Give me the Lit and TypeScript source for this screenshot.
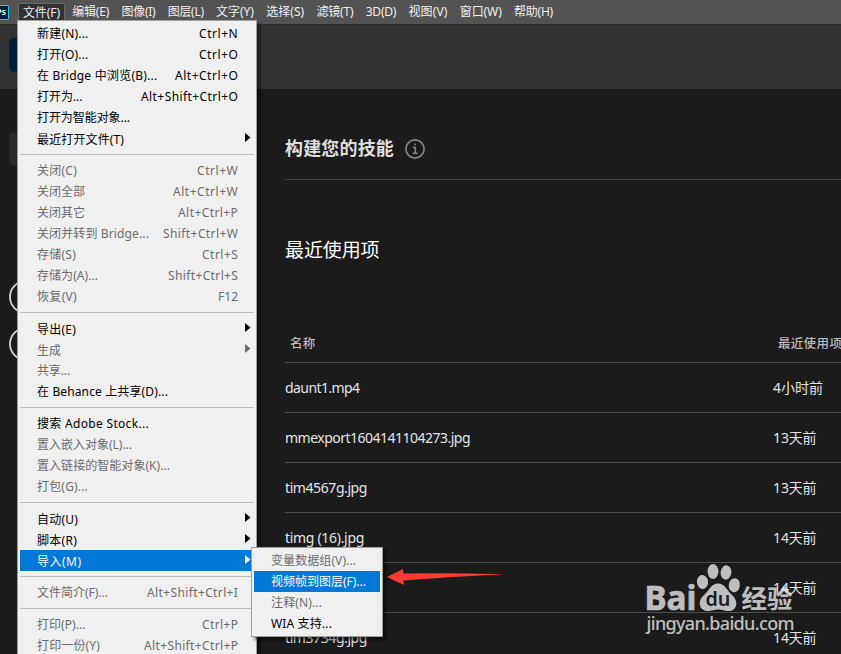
import { LitElement, html, css } from "lit";
import { customElement, property } from "lit/decorators.js";
import { classMap } from "lit/directives/class-map.js";

/** A run of text tracked so that it spans exactly `width` pixels. */
@customElement("fit-text")
class FitText extends LitElement {
  @property() text = "";
  @property({ type: Number }) width = 0;
  static styles = css`
    :host { display: inline-block; white-space: pre; }
  `;
  updated() {
    const span = this.renderRoot.querySelector("span") as HTMLElement;
    span.style.letterSpacing = "0px";
    if (!this.width) return;
    const natural = span.getBoundingClientRect().width;
    span.style.letterSpacing = `${(this.width - natural) / this.text.length}px`;
  }
  render() {
    return html`<span>${this.text}</span>`;
  }
}

interface Item {
  label: string;
  w: number;
  keys?: string;
  kw?: number;
  sub?: boolean;
  off?: boolean;
  on?: boolean;
}

const fileMenu: Item[][] = [
  [
    { label: "新建(N)...", w: 51.5, keys: "Ctrl+N", kw: 39.3 },
    { label: "打开(O)...", w: 51.5, keys: "Ctrl+O", kw: 39.3 },
    { label: "在 Bridge 中浏览(B)...", w: 120.5, keys: "Alt+Ctrl+O", kw: 63.3 },
    { label: "打开为...", w: 45.5, keys: "Alt+Shift+Ctrl+O", kw: 97.3 },
    { label: "打开为智能对象...", w: 93 },
    { label: "最近打开文件(T)", w: 87, sub: true },
  ],
  [
    { label: "关闭(C)", w: 40, keys: "Ctrl+W", kw: 41.3, off: true },
    { label: "关闭全部", w: 48, keys: "Alt+Ctrl+W", kw: 65.3, off: true },
    { label: "关闭其它", w: 48, keys: "Alt+Ctrl+P", kw: 60.3, off: true },
    { label: "关闭并转到 Bridge...", w: 112, keys: "Shift+Ctrl+W", kw: 75.3, off: true },
    { label: "存储(S)", w: 39, keys: "Ctrl+S", kw: 36.3, off: true },
    { label: "存储为(A)...", w: 61, keys: "Shift+Ctrl+S", kw: 70.3, off: true },
    { label: "恢复(V)", w: 40, keys: "F12", kw: 20.3, off: true },
  ],
  [
    { label: "导出(E)", w: 39, sub: true },
    { label: "生成", w: 24, sub: true, off: true },
    { label: "共享...", w: 33, off: true },
    { label: "在 Behance 上共享(D)...", w: 131 },
  ],
  [
    { label: "搜索 Adobe Stock...", w: 112 },
    { label: "置入嵌入对象(L)...", w: 95, off: true },
    { label: "置入链接的智能对象(K)...", w: 133, off: true },
    { label: "打包(G)...", w: 51, off: true },
  ],
  [
    { label: "自动(U)", w: 41, sub: true },
    { label: "脚本(R)", w: 40, sub: true },
    { label: "导入(M)", w: 44.5, sub: true, on: true },
  ],
  [{ label: "文件简介(F)...", w: 71, keys: "Alt+Shift+Ctrl+I", kw: 91.3, off: true }],
  [
    { label: "打印(P)...", w: 48.5, keys: "Ctrl+P", kw: 36.3, off: true },
    { label: "打印一份(Y)", w: 63, keys: "Alt+Shift+Ctrl+P", kw: 94.3, off: true },
  ],
];

const importMenu: Item[][] = [
  [
    { label: "变量数据组(V)...", w: 85, off: true },
    { label: "视频帧到图层(F)...", w: 95, on: true },
    { label: "注释(N)...", w: 51, off: true },
    { label: "WIA 支持...", w: 61 },
  ],
];

@customElement("drop-menu")
class DropMenu extends LitElement {
  @property({ attribute: false }) groups: Item[][] = [];
  static styles = css`
    :host {
      display: block;
      box-sizing: border-box;
      background: #f0f0f0;
      border: 1px solid #a0a0a0;
      padding: 2px;
      box-shadow: 3px 3px 3px rgba(0, 0, 0, 0.5);
      font-size: 12px;
      color: #000;
    }
    .row {
      height: 21px;
      display: flex;
      align-items: center;
      padding: 0 0 0 17px;
    }
    .row fit-text { line-height: 21px; height: 21px; }
    .row.sub fit-text { line-height: 23px; }
    .keys { margin-left: auto; margin-right: 15.7px; }
    .off { color: #6d6d6d; }
    .on { background: #0078d7; color: #fff; }
    .arrow { margin: 0 3px 1px auto; width: 6px; height: 10px; fill: currentColor; }
    .sep { height: 1px; margin: 5px 0; background: #bdbdbd; }
  `;
  render() {
    return this.groups.map(
      (g, i) => html`
        ${i ? html`<div class="sep"></div>` : ""}
        ${g.map(
          (it) => html`<div class=${classMap({ row: true, off: !!it.off, on: !!it.on, sub: !!it.sub })}>
            <fit-text .text=${it.label} .width=${it.w}></fit-text>
            ${it.keys ? html`<fit-text class="keys" .text=${it.keys} .width=${it.kw ?? 0}></fit-text>` : ""}
            ${it.sub ? html`<svg class="arrow" viewBox="0 0 6 10"><path d="M0 0L5.5 4.5L0 9Z"/></svg>` : ""}
          </div>`
        )}
      `
    );
  }
}

const bar: [string, number][] = [
  ["文件(F)", 37], ["编辑(E)", 37], ["图像(I)", 34], ["图层(L)", 36], ["文字(Y)", 38],
  ["选择(S)", 38], ["滤镜(T)", 37], ["3D(D)", 30.5], ["视图(V)", 39], ["窗口(W)", 42], ["帮助(H)", 39],
];

const files: [string, number, string, number][] = [
  ["daunt1.mp4", 74.5, "4小时前", 50],
  ["mmexport1604141104273.jpg", 185, "13天前", 43.5],
  ["tim4567g.jpg", 82, "13天前", 43.5],
  ["timg (16).jpg", 79, "14天前", 43.5],
  ["tim2208g.jpg", 82, "14天前", 43.5],
  ["tim3734g.jpg", 82, "14天前", 43.5],
];

@customElement("app-root")
class AppRoot extends LitElement {
  static styles = css`
    :host {
      display: block;
      position: relative;
      width: 841px;
      height: 654px;
      overflow: hidden;
      background: #1b1b1b;
      color: #e4e4e4;
      font-family: "Noto Sans", "Noto Sans CJK SC", sans-serif;
    }
    .bar {
      height: 24px;
      box-sizing: border-box;
      background: #535353;
      display: flex;
      align-items: center;
      font-size: 12px;
      color: #f0f0f0;
      gap: 12.25px;
    }
    .ps {
      width: 9px; height: 15px; box-sizing: border-box; margin-right: -3.3px;
      border: 1px solid #26c9ff; border-left: 0; border-radius: 0 2px 2px 0;
      background: #001d34; color: #d5f3ff; overflow: hidden;
      display: flex; justify-content: flex-end; align-items: center;
      font: bold 9px/12px "Noto Sans", sans-serif; padding-right: 2px;
    }
    .bar fit-text { line-height: 18px; }
    .bar .active {
      background: #323232; border: 1px solid #686868; border-radius: 2px 2px 0 0;
      height: 17px; line-height: 17px; padding: 0 4px; margin-right: -5px;
    }
    .hero { height: 64px; background: #323232; border-top: 1px solid #282828; }
    .main { padding-left: 285px; display: flex; flex-direction: column; }
    .skills {
      height: 91px; box-sizing: border-box; border-bottom: 1px solid #3f3f3f;
      display: flex; align-items: center; gap: 11px; padding-top: 29px;
      font-size: 18px; font-weight: bold; color: #dedede;
    }
    .info { width: 20px; height: 20px; }
    .skills fit-text { line-height: 30px; margin-top: -2px; }
    h2 { margin: 0; height: 142px; line-height: 140px; font-size: 19px; font-weight: 400; color: #fff; }
    .head {
      height: 41px; box-sizing: border-box; border-bottom: 1px solid #4b4b4b;
      display: flex; align-items: center; font-size: 12.5px; font-weight: 500; color: #bcbcbc;
      font-family: "Noto Sans CJK SC", sans-serif; padding-left: 5px;
    }
    .name { width: 488px; flex: none; }
    .file {
      height: 50px; box-sizing: border-box; border-bottom: 1px solid #4b4b4b;
      display: flex; align-items: center; font-size: 14px;
    }
    .date { margin-top: -2px; }
    .left { position: absolute; left: 0; top: 0; }
    .menu { position: absolute; left: 17px; top: 20px; width: 240px; height: 660px; }
    .submenu { position: absolute; left: 251px; top: 547px; width: 132px; height: 90px; }
    .red { position: absolute; left: 385px; top: 566px; }
    .mark { position: absolute; left: 640px; top: 560px; opacity: 0.76; }
    .mark text { font-family: "Noto Sans", "Noto Sans CJK SC", sans-serif; }
  `;
  render() {
    return html`
      <div class="bar">
        <div class="ps">Ps</div>
        ${bar.map(([t, w], i) => html`<fit-text class=${i ? "" : "active"} .text=${t} .width=${w}></fit-text>`)}
      </div>
      <div class="hero"></div>
      <div class="main">
        <div class="skills">
          <fit-text .text=${"构建您的技能"} .width=${109}></fit-text>
          <svg class="info" viewBox="0 0 20 20" fill="none" stroke="#868686">
            <circle cx="10" cy="10" r="9.1" stroke-width="1.6" />
            <path d="M10 4.5V6.5M8 8.5H10.3V14M7.7 14.3H12.5" stroke-width="1.5" />
          </svg>
        </div>
        <h2><fit-text .text=${"最近使用项"} .width=${94.5}></fit-text></h2>
        <div class="head">
          <div class="name"><fit-text .text=${"名称"} .width=${25.5}></fit-text></div>
          <fit-text .text=${"最近使用项"} .width=${64}></fit-text>
        </div>
        ${files.map(
          ([n, w, d, dw]) => html`<div class="file">
            <div class="name"><fit-text .text=${n} .width=${w}></fit-text></div>
            <fit-text class="date" .text=${d} .width=${dw}></fit-text>
          </div>`
        )}
      </div>
      <svg class="left" width="20" height="654">
        <rect x="9" y="38" width="30" height="34" rx="5" fill="#001e36" />
        <rect x="9" y="133" width="30" height="32" rx="4" fill="#2b2b2b" />
        <g fill="none" stroke="#d6d6d6" stroke-width="1.8">
          <circle cx="26" cy="297" r="16" />
          <circle cx="26" cy="344" r="16" />
        </g>
      </svg>
      <svg class="mark" width="170" height="80" fill="#f2f2f2">
        <text x="4.5" y="50" font-size="33.5" font-weight="700" textLength="52" lengthAdjust="spacingAndGlyphs" stroke="#f2f2f2" stroke-width="0.6">Bai</text>
        <ellipse cx="62.5" cy="22" rx="5.6" ry="7" transform="rotate(-8 62.5 22)" />
        <ellipse cx="73" cy="11.5" rx="5.4" ry="7.4" />
        <ellipse cx="86" cy="12.5" rx="5.4" ry="7.2" transform="rotate(10 86 12.5)" />
        <ellipse cx="94.3" cy="25.2" rx="5.6" ry="7" transform="rotate(8 94.3 25.2)" />
        <path d="M78 23.5C85 23.5 87 31 92 35C99 41 97 51 89 51C84 51 82 49.5 78 49.5C74 49.5 72 51 68 51C59 51 57 41 64 35C69 31 71 23.5 78 23.5Z" />
        <text x="65.5" y="45.5" font-size="19" font-weight="600" fill="#1b1b1b" textLength="25" lengthAdjust="spacingAndGlyphs">du</text>
        <text x="101.5" y="48" font-size="25" font-weight="700" textLength="51" lengthAdjust="spacingAndGlyphs">经验</text>
        <text x="6.5" y="70" font-size="18" font-weight="500" textLength="148" lengthAdjust="spacing">jingyan.baidu.com</text>
      </svg>
      <drop-menu class="menu" .groups=${fileMenu}></drop-menu>
      <drop-menu class="submenu" .groups=${importMenu}></drop-menu>
      <svg class="red" width="120" height="22">
        <path d="M2 11L18 3L18.5 7.5Q70 7 119 8.3Q70 10.5 18.5 14.5L19 19Z" fill="#ff3b35" />
      </svg>
    `;
  }
}
